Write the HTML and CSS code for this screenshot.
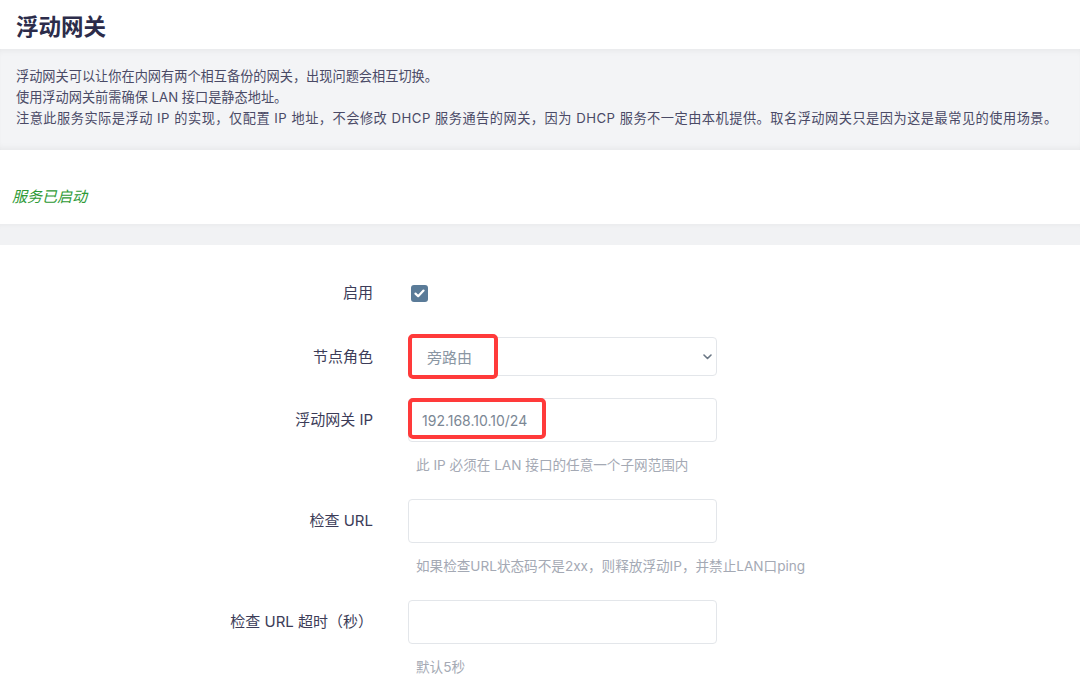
FILE: index.html
```html
<!DOCTYPE html>
<html>
<head>
    <title>浮动网关</title>
    <link rel="stylesheet" href="styles.css">
</head>
<body>
    <div class="header">
        <h1>浮动网关</h1>
    </div>
    <div class="desc">
        <p>浮动网关可以让你在内网有两个相互备份的网关，出现问题会相互切换。</p>
        <p>使用浮动网关前需确保 LAN 接口是静态地址。</p>
        <p class="note">注意此服务实际是浮动 IP 的实现，仅配置 IP 地址，不会修改 DHCP 服务通告的网关，因为 DHCP 服务不一定由本机提供。取名浮动网关只是因为这是最常见的使用场景。</p>
    </div>
    <div class="status">
        <em>服务已启动</em>
    </div>
    <div class="divider"></div>
    <div class="form">
        <div class="row row-check">
            <div class="label">启用</div>
            <div class="field">
                <span class="checkbox">
                    <svg width="11" height="9" viewBox="0 0 11 9"><path d="M1.5 4.6 L4.2 7.2 L9.5 1.6" fill="none" stroke="#fff" stroke-width="2.2" stroke-linecap="round" stroke-linejoin="round"/></svg>
                </span>
            </div>
        </div>
        <div class="row row-select">
            <div class="label label-select">节点角色</div>
            <div class="field">
                <div class="control select">
                    <span class="value">旁路由</span>
                    <svg class="chevron" width="9" height="6" viewBox="0 0 9 6"><path d="M1 1 L4.5 4.5 L8 1" fill="none" stroke="#6b7785" stroke-width="1.6" stroke-linecap="round" stroke-linejoin="round"/></svg>
                    <span class="mark mark-select"></span>
                </div>
            </div>
        </div>
        <div class="row">
            <div class="label">浮动网关 IP</div>
            <div class="field">
                <div class="control input">
                    <span class="value ip">192.168.10.10/24</span>
                    <span class="mark mark-ip"></span>
                </div>
                <div class="hint">此 IP 必须在 LAN 接口的任意一个子网范围内</div>
            </div>
        </div>
        <div class="row">
            <div class="label">检查 URL</div>
            <div class="field">
                <div class="control input"></div>
                <div class="hint">如果检查URL状态码不是2xx，则释放浮动IP，并禁止LAN口ping</div>
            </div>
        </div>
        <div class="row">
            <div class="label">检查 URL 超时（秒）</div>
            <div class="field">
                <div class="control input"></div>
                <div class="hint">默认5秒</div>
            </div>
        </div>
    </div>
</body>
</html>
```

FILE: styles.css
```css
body {
    font-family: Inter, "Noto Sans CJK SC", sans-serif;
    margin: 0;
    background: #fff;
    color: #3c3c58;
}
.header {
    height: 49px;
    padding-left: 16px;
    display: flex;
    align-items: center;
}
.header h1 {
    margin: 0;
    font-size: 22.5px;
    font-weight: bold;
    color: #2c2c4a;
}
.desc {
    background: #f3f4f6;
    padding: 17px 16px 21px;
    box-shadow: inset 0 6px 6px -4px rgba(0,0,0,0.05), inset 0 -6px 6px -4px rgba(0,0,0,0.05);
}
.desc p {
    margin: 0;
    font-size: 13.2px;
    line-height: 21px;
    color: #4a4a66;
    white-space: nowrap;
}
.desc .note {
    letter-spacing: 0.5px;
}
.status {
    height: 74px;
    padding-left: 12px;
    display: flex;
    align-items: flex-end;
}
.status em {
    font-size: 15px;
    color: #2e9a36;
    line-height: 20px;
    margin-bottom: 17px;
}
.divider {
    height: 21px;
    background: #f1f2f4;
    box-shadow: inset 0 5px 5px -4px rgba(0,0,0,0.04);
}
.form {
    padding-top: 28px;
}
.row {
    display: flex;
    gap: 35px;
    margin-bottom: 24px;
}
.row-check {
    margin-bottom: 24px;
}
.row-select {
    margin-bottom: 22px;
}
.label {
    width: 373px;
    text-align: right;
    font-size: 15px;
    line-height: 44px;
    color: #3c3c58;
    white-space: nowrap;
}
.label-select {
    line-height: 39px;
}
.row-check .label {
    line-height: 40px;
}
.field {
    width: 309px;
}
.row-check .field {
    display: flex;
    align-items: center;
    padding-left: 3px;
}
.checkbox {
    width: 17px;
    height: 17px;
    border-radius: 3px;
    background: #5a7b98;
    display: flex;
    align-items: center;
    justify-content: center;
}
.control {
    position: relative;
    box-sizing: border-box;
    border: 1px solid #e3e6ea;
    border-radius: 4px;
    background: #fff;
    display: flex;
    align-items: center;
}
.select {
    height: 39px;
    padding: 0 4px 0 18px;
    justify-content: space-between;
}
.input {
    height: 44px;
    padding: 0 13px;
}
.value {
    font-size: 15px;
    color: #8a96a3;
}
.value.ip {
    font-size: 14px;
    color: #7b8794;
}
.mark {
    position: absolute;
    left: -1px;
    border: 4px solid #ff3a3a;
    border-radius: 5px;
    box-sizing: border-box;
}
.mark-select {
    top: -4px;
    width: 90px;
    height: 45px;
}
.mark-ip {
    top: -1px;
    width: 138px;
    height: 41px;
}
.hint {
    margin-top: 13px;
    padding-left: 8px;
    font-size: 13.6px;
    line-height: 20px;
    color: #a4a9b4;
    white-space: nowrap;
}
```
